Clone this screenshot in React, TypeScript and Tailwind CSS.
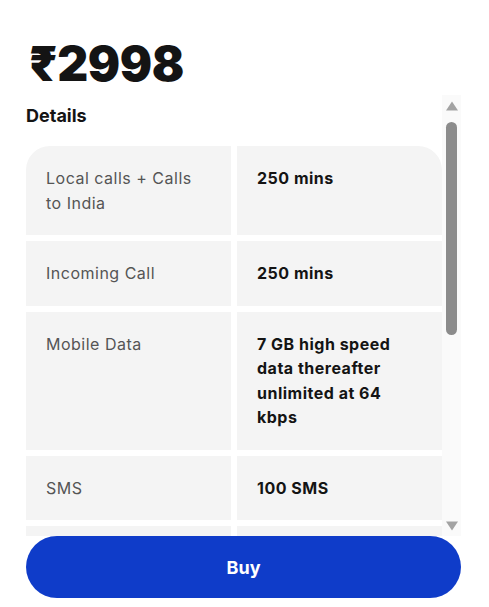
import React from 'react';

type Row = { label: string; value: string };

const rows: Row[] = [
  { label: 'Local calls + Calls to India', value: '250 mins' },
  { label: 'Incoming Call', value: '250 mins' },
  { label: 'Mobile Data', value: '7 GB high speed data thereafter unlimited at 64 kbps' },
  { label: 'SMS', value: '100 SMS' },
  { label: 'Validity', value: '30 days' },
  { label: 'Countries', value: 'UAE, Saudi Arabia, Qatar, Kuwait, Oman, Bahrain' },
  { label: 'Auto-renewal', value: 'No' },
];

function ScrollBar() {
  return (
    <div className="w-[19px] shrink-0 bg-[#fafafa] flex flex-col items-center">
      <svg width="12" height="10" viewBox="0 0 12 10" className="mt-[6px] shrink-0">
        <polygon points="6,0.5 12,9.5 0,9.5" fill="#a3a3a3" />
      </svg>
      <div className="mt-[11px] h-[213px] w-[11px] rounded-full bg-[#8c8c8c] shrink-0" />
      <div className="flex-1" />
      <svg width="12" height="10" viewBox="0 0 12 10" className="mb-[5px] shrink-0">
        <polygon points="0,0.5 12,0.5 6,9.5" fill="#a3a3a3" />
      </svg>
    </div>
  );
}

export default function App() {
  return (
    <div
      className="h-[607px] w-full bg-white flex flex-col pl-[26px] pr-[28px] text-[#141414]"
      style={{ fontFamily: 'Inter, "Noto Sans", sans-serif' }}
    >
      {/* Price */}
      <div className="mt-[40px] h-[48px] flex items-center">
        <h1 className="text-[48px] leading-none font-black tracking-[-0.4px] ml-[3px]">₹2998</h1>
      </div>

      {/* Scrollable details */}
      <div className="mt-[7px] h-[441px] flex overflow-hidden">
        <div className="flex-1 overflow-hidden">
          <h2 className="pt-[9px] text-[18px] leading-[24px] font-bold">Details</h2>
          <div className="mt-[18px] grid grid-cols-2 gap-[6px] rounded-t-3xl overflow-hidden tracking-[0.5px]">
            {rows.map((r) => (
              <React.Fragment key={r.label}>
                <div className="bg-[#f4f4f4] px-5 py-5 text-[16px] leading-[24.5px] text-[#555555]">
                  {r.label}
                </div>
                <div className="bg-[#f4f4f4] px-5 py-5 text-[16px] leading-[24.5px] font-bold text-[#141414]">
                  {r.value}
                </div>
              </React.Fragment>
            ))}
          </div>
        </div>
        <ScrollBar />
      </div>

      {/* Buy button */}
      <button className="h-[62px] w-full rounded-full bg-[#0f3cc9] text-white text-[18px] font-bold shrink-0">
        Buy
      </button>
    </div>
  );
}
